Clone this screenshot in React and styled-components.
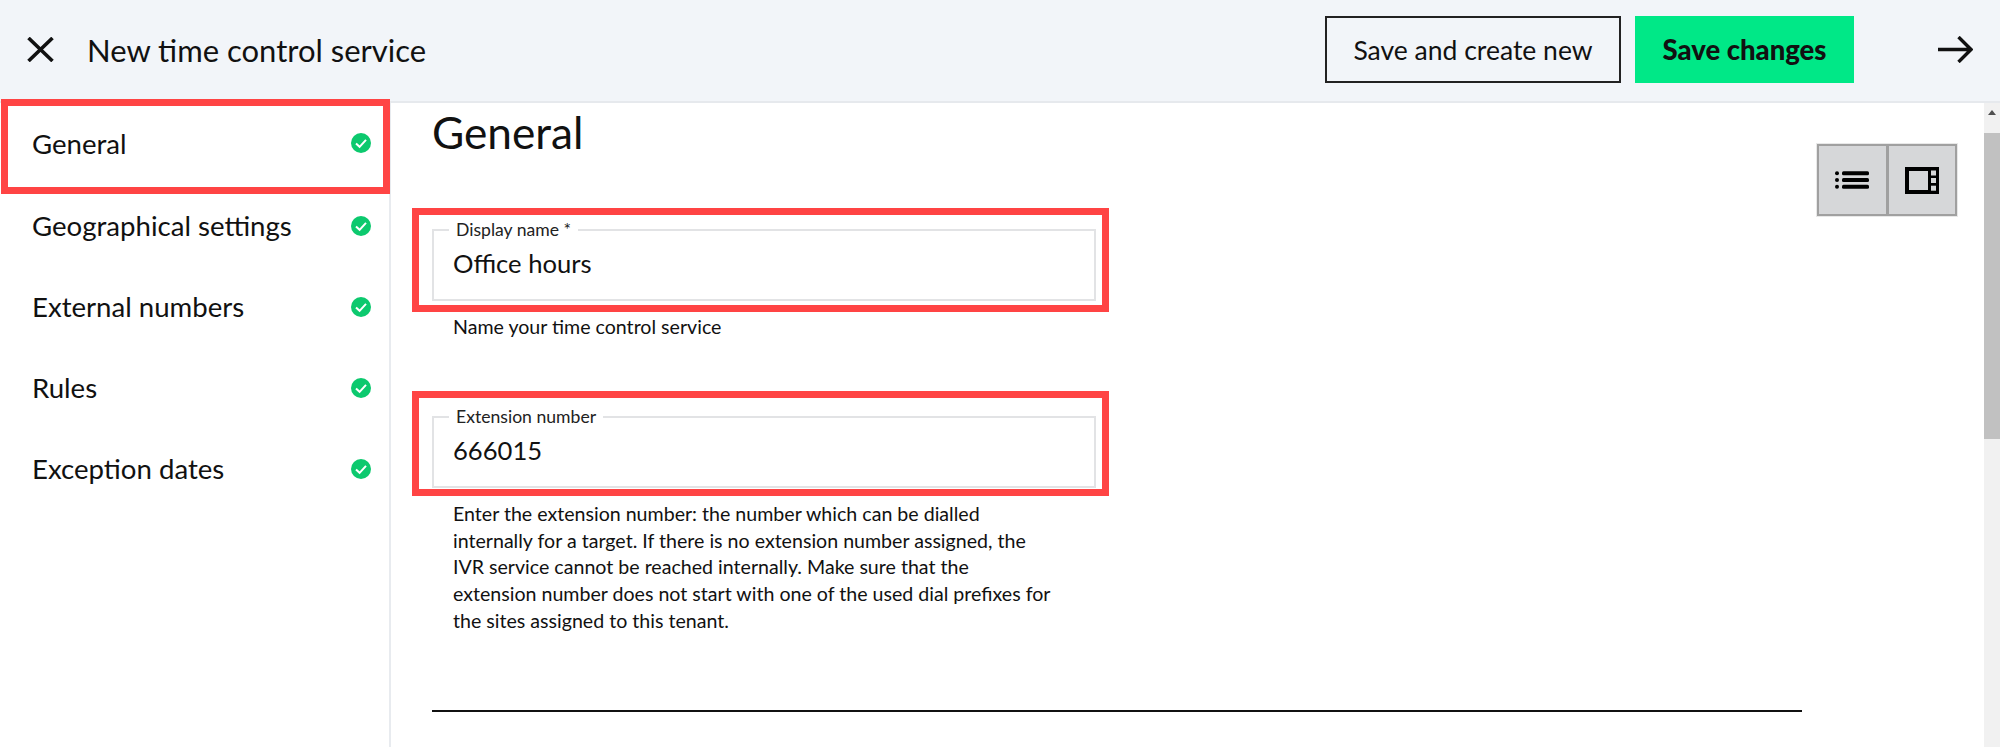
import React from "react";
import styled, { createGlobalStyle } from "styled-components";

const Global = createGlobalStyle`
  html, body { margin: 0; padding: 0; height: 747px; overflow: hidden; background: #fff; }
  body { font-family: "Lato", "Inter", sans-serif; color: #111; }
  * { box-sizing: border-box; }
`;
const Page = styled.div`display: flex; flex-direction: column; width: 2000px; height: 747px; overflow: hidden;`;
const Header = styled.header`
  flex: none; display: flex; align-items: center; height: 103px; padding: 0 27px 2px;
  background: #f2f5f9; border-bottom: 2px solid #e6e9ed;
`;
const IconSlot = styled.svg`display: block; flex: none; color: #111;`;
const Title = styled.h1`
  flex: 1; margin: 0 0 0 33px; font-size: 31px; font-weight: 400; line-height: 40px; letter-spacing: 0;
`;
const Button = styled.button`
  height: 67px; padding: 0; font-family: inherit; color: #111; cursor: pointer;
  width: ${p => p.$width}px; font-size: ${p => p.$primary ? "27.5px" : "26.5px"}; font-weight: ${p => p.$primary ? 900 : 400};
  background: ${p => p.$primary ? "#00e887" : "transparent"};
  border: ${p => p.$primary ? "0" : "2px solid #222"};
  margin-left: ${p => p.$primary ? "14px" : "0"};
`;
const ArrowSlot = styled.div`margin-left: 84px; display: flex;`;
const Body = styled.div`flex: 1; display: flex; min-height: 0;`;
const Sidebar = styled.nav`flex: none; width: 391px; border-right: 2px solid #e8ebef; background: #fff;`;
const Row = styled.div`
  position: relative; display: flex; align-items: center; justify-content: space-between;
  height: ${p => p.$first ? 82 : 81}px; padding: 0 18px 0 32px; font-size: 27.6px;
  ${p => p.$first ? "padding-bottom: 2px;" : ""}
`;
const Marker = styled.div`
  position: absolute; z-index: 2; pointer-events: none; border: 7px solid #ff4444;
  top: ${p => p.$t}px; bottom: ${p => p.$b}px; left: ${p => p.$l}px; right: ${p => p.$r}px;
`;
const Main = styled.main`flex: 1; display: flex; min-width: 0; padding-left: 41px;`;
const Content = styled.div`flex: none; width: 1370px;`;
const Heading = styled.h2`margin: 0; height: 58px; font-size: 44.2px; line-height: 58px; font-weight: 400;`;
const Field = styled.div`position: relative; margin-top: ${p => p.$mt}px; width: 664px;`;
const Frame = styled.fieldset`
  margin: 0; padding: 0; height: 81px; min-width: 0; border: 2px solid #e2e3e5;
`;
const Legend = styled.legend`
  margin-left: 15px; padding: 0 7px; height: 20px; font-size: 17.6px; line-height: 20px; color: #222;
`;
const Value = styled.div`font-size: 25.6px; line-height: 34px; margin-top: 6px; padding-left: 19px; color: #111;`;
const Help = styled.p`margin: ${p => p.$mt}px 0 0 21px; font-size: 19.6px; line-height: 26.8px; color: #111;`;
const HelpLine = styled.span`display: block; white-space: nowrap;`;
const Rule = styled.hr`margin: 75px 0 0; height: 2px; border: 0; background: #111;`;
const Aside = styled.aside`flex: 1; padding: 41px 0 0 15px;`;
const Toggle = styled.div`
  display: flex; width: 140px; height: 72px; background: #d6d7d9; border: 2px solid #a0a0a0;
  outline: 1px solid #e8e8e8;
`;
const ToggleCell = styled.div`
  flex: 1; display: flex; align-items: center; justify-content: center;
  & + & { border-left: 3px solid #a0a0a0; }
`;
const Scrollbar = styled.div`flex: none; display: flex; flex-direction: column; width: 16px; background: #f1f1f1;`;
const ScrollArrow = styled.div`
  height: 30px; display: flex; justify-content: center; padding-top: 7px;
  &::before { content: ""; width: 0; height: 0; border-left: 4px solid transparent; border-right: 4px solid transparent; border-bottom: 5px solid #505050; }
`;
const Thumb = styled.div`height: 306px; background: #c1c1c1;`;

const Close = () => (
  <IconSlot width="27" height="25" viewBox="0 0 27 25" fill="none" stroke="currentColor" strokeWidth="3.6" strokeLinecap="butt">
    <path d="M1.5 1 L25.5 24 M25.5 1 L1.5 24" />
  </IconSlot>
);
const Arrow = () => (
  <IconSlot width="35" height="27" viewBox="0 0 35 27" fill="none" stroke="currentColor" strokeWidth="3.4">
    <path d="M0 13.5 H32.5 M20.5 1 L33 13.5 L20.5 26" />
  </IconSlot>
);
const Check = () => (
  <IconSlot width="20" height="20" viewBox="0 0 20 20">
    <circle cx="10" cy="10" r="10" fill="#0cc96e" />
    <path d="M5 10.4 L8.6 13.8 L15 6.8" fill="none" stroke="#fff" strokeWidth="2" />
  </IconSlot>
);
const ListIcon = () => (
  <IconSlot width="34" height="18" viewBox="0 0 34 18" fill="#000">
    <circle cx="2" cy="2.2" r="2" /><circle cx="2" cy="9" r="2" /><circle cx="2" cy="15.8" r="2" />
    <rect x="7" y="0.2" width="27" height="4" rx="1.5" />
    <rect x="7" y="7" width="27" height="4" rx="1.5" />
    <rect x="7" y="13.8" width="27" height="4" rx="1.5" />
  </IconSlot>
);
const PanelIcon = () => (
  <IconSlot width="34" height="27" viewBox="0 0 34 27">
    <rect width="34" height="27" fill="#000" />
    <rect x="4" y="4" width="19" height="19" fill="#d6d7d9" />
    <rect x="26" y="3.5" width="5" height="5" fill="#d6d7d9" />
    <rect x="26" y="11" width="5" height="5" fill="#d6d7d9" />
    <rect x="26" y="18.7" width="5" height="5" fill="#d6d7d9" />
  </IconSlot>
);

const items = ["General", "Geographical settings", "External numbers", "Rules", "Exception dates"];
const extensionHelp = [
  "Enter the extension number: the number which can be dialled",
  "internally for a target. If there is no extension number assigned, the",
  "IVR service cannot be reached internally. Make sure that the",
  "extension number does not start with one of the used dial prefixes for",
  "the sites assigned to this tenant.",
];

export default function App() {
  return (
    <Page>
      <Global />
      <Header>
        <Close />
        <Title>New time control service</Title>
        <Button $width={296}>Save and create new</Button>
        <Button $primary $width={219}>Save changes</Button>
        <ArrowSlot><Arrow /></ArrowSlot>
      </Header>
      <Body>
        <Sidebar>
          {items.map((label, i) => (
            <Row key={label} $first={i === 0}>
              <span>{label}</span>
              <Check />
              {i === 0 && <Marker $t={-4} $b={-9} $l={1} $r={-1} />}
            </Row>
          ))}
        </Sidebar>
        <Main>
          <Content>
            <Heading>General</Heading>
            <Field $mt={59}>
              <Frame>
                <Legend>Display name *</Legend>
                <Value>Office hours</Value>
              </Frame>
              <Marker $t={-12} $b={-11} $l={-20} $r={-13} />
            </Field>
            <Help $mt={13}>Name your time control service</Help>
            <Field $mt={66}>
              <Frame>
                <Legend>Extension number</Legend>
                <Value>666015</Value>
              </Frame>
              <Marker $t={-16} $b={-8} $l={-20} $r={-13} />
            </Field>
            <Help $mt={13}>
              {extensionHelp.map(line => <HelpLine key={line}>{line}</HelpLine>)}
            </Help>
            <Rule />
          </Content>
          <Aside>
            <Toggle>
              <ToggleCell><ListIcon /></ToggleCell>
              <ToggleCell><PanelIcon /></ToggleCell>
            </Toggle>
          </Aside>
        </Main>
        <Scrollbar>
          <ScrollArrow />
          <Thumb />
        </Scrollbar>
      </Body>
    </Page>
  );
}
